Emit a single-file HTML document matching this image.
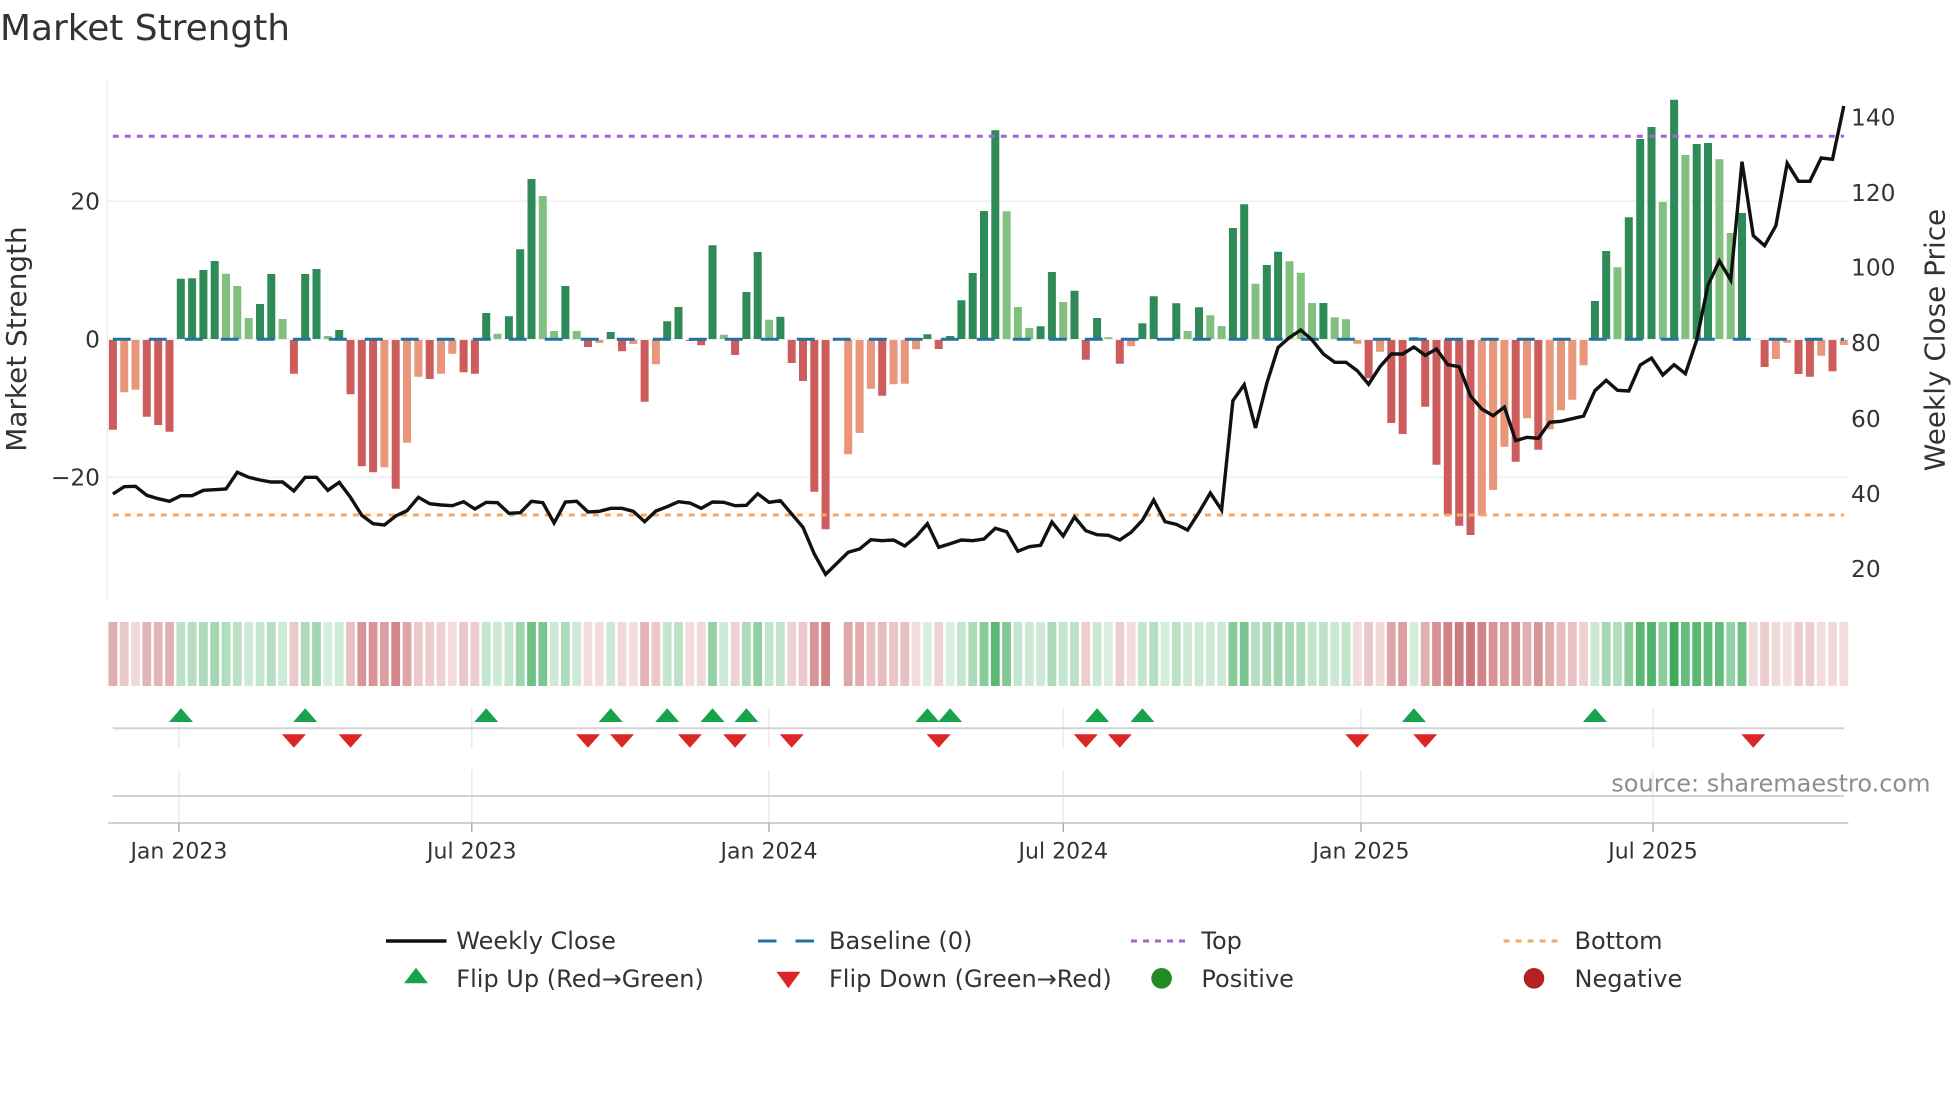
<!DOCTYPE html>
<html><head><meta charset="utf-8"><title>Market Strength</title>
<style>
html,body{margin:0;padding:0;background:#fff;width:1960px;height:1102px;overflow:hidden}
svg{display:block}
text{font-family:"DejaVu Sans","Liberation Sans",sans-serif;fill:#333}
.t{font-size:22px}
.y{font-size:23.3px}
.l{font-size:27.9px}
.g{font-size:24px}
</style></head><body>
<svg width="1960" height="1102" viewBox="0 0 1960 1102" xmlns="http://www.w3.org/2000/svg">
<rect width="1960" height="1102" fill="#fff"/>
<text x="0" y="40" style="font-size:35.9px">Market Strength</text>

<!-- spine + grid -->
<path d="M107.3 80V599" stroke="#f0f0f0" stroke-width="1.6" fill="none"/>
<path d="M107 201.3H1849M107 477.3H1849M107 339.3H1849" stroke="#efefef" stroke-width="1.6" fill="none"/>

<!-- bars -->
<g fill="none" stroke-width="8">
<path stroke="#2e8b57" d="M180.8 339V278.7M192.1 339V278.3M203.4 339V270M214.7 339V261M260 339V304M271.3 339V274M305.2 339V274M316.5 339V269M339.2 339V330M486.2 339V313M508.9 339V316.3M520.2 339V249.3M531.5 339V179M565.4 339V286M610.7 339V332M667.2 339V321.3M678.5 339V307M712.5 339V245.3M746.4 339V292M757.7 339V252M780.4 339V316.7M927.4 339V334.3M950.1 339V336M961.4 339V300.3M972.7 339V273M984 339V211M995.3 339V130.3M1040.6 339V326.3M1051.9 339V272M1074.5 339V290.7M1097.1 339V318M1142.4 339V323.3M1153.7 339V296.3M1176.3 339V303.3M1199 339V307.3M1232.9 339V228M1244.2 339V204.3M1266.8 339V265M1278.1 339V251.7M1323.4 339V303M1413.9 339V337.3M1594.9 339V301M1606.2 339V251M1628.8 339V217.3M1640.2 339V139M1651.5 339V127M1674.1 339V99.7M1696.7 339V144M1708 339V143M1742 339V213"/>
<path stroke="#81c07f" d="M226 339V273.7M237.3 339V286M248.7 339V318M282.6 339V319M327.8 339V336M497.5 339V333.7M542.8 339V196M554.1 339V331M576.7 339V331M723.8 339V334.7M769.1 339V319.7M1006.6 339V211.3M1017.9 339V307M1029.3 339V328M1063.2 339V302M1108.4 339V337.3M1187.6 339V331M1210.3 339V315.3M1221.6 339V326M1255.5 339V283.7M1289.5 339V261.3M1300.8 339V272.7M1312.1 339V303M1334.7 339V317.3M1346 339V319.3M1617.5 339V267.3M1662.8 339V202M1685.4 339V155M1719.4 339V159.3M1730.7 339V233"/>
<path stroke="#cd5c5c" d="M112.9 340V429.7M146.8 340V416.7M158.2 340V425M169.5 340V431.7M293.9 340V373.7M350.5 340V394.3M361.8 340V466.3M373.1 340V472.3M395.7 340V488.7M429.7 340V379M463.6 340V372.3M474.9 340V373.7M588 340V347M622 340V351.3M644.6 340V401.7M689.9 340V341M701.2 340V345.3M735.1 340V355M791.7 340V363M803 340V381M814.3 340V491.7M825.6 340V529.3M882.2 340V395.7M938.7 340V349M1085.8 340V359.7M1119.8 340V363.7M1368.6 340V378.3M1391.3 340V423M1402.6 340V434M1425.2 340V406.7M1436.5 340V464.7M1447.8 340V514.7M1459.2 340V525.7M1470.5 340V535M1515.7 340V461.7M1538.3 340V449.7M1764.6 340V367M1798.5 340V374M1809.9 340V376.7M1832.5 340V371.3"/>
<path stroke="#e9967a" d="M124.2 340V392.3M135.5 340V389.7M384.4 340V467.3M407 340V442.7M418.4 340V376.7M441 340V373.7M452.3 340V353.7M599.4 340V343M633.3 340V344M655.9 340V364.3M848.2 340V454.3M859.6 340V433M870.9 340V388.7M893.5 340V384.3M904.8 340V383.7M916.1 340V349.3M1131.1 340V346.3M1357.3 340V343.7M1380 340V351.7M1481.8 340V515.7M1493.1 340V490M1504.4 340V446.7M1527 340V418.3M1549.7 340V429.3M1561 340V410.3M1572.3 340V399.7M1583.6 340V365.3M1775.9 340V359M1787.2 340V342.7M1821.2 340V355.7M1843.8 340V345"/>
</g>

<!-- reference lines -->
<path d="M112.8 339.3H1844" stroke="#2471a3" stroke-width="3" stroke-dasharray="17.9 18.1" fill="none"/>
<path d="M112.8 136.3H1844" stroke="#a066d3" stroke-width="3" stroke-dasharray="6 6" fill="none"/>
<path d="M112.8 515H1844" stroke="#f2a868" stroke-width="3" stroke-dasharray="6 6" fill="none"/>

<!-- weekly close -->
<polyline fill="none" stroke="#111" stroke-width="3.4" stroke-linejoin="miter" points="112.9,494 124.2,486.7 135.5,486.3 146.8,495.3 158.2,498.7 169.5,501.3 180.8,495.7 192.1,495.7 203.4,490.3 214.7,489.7 226,489 237.3,472.3 248.7,477.3 260,480 271.3,482 282.6,482 293.9,491 305.2,477.3 316.5,477.3 327.8,490.3 339.2,482.3 350.5,497.3 361.8,515.3 373.1,523.7 384.4,525 395.7,516 407,510.7 418.4,497.3 429.7,503.7 441,505 452.3,505.7 463.6,501.7 474.9,509 486.2,502.3 497.5,502.7 508.9,513.3 520.2,512.7 531.5,501.3 542.8,502.7 554.1,523 565.4,502 576.7,501.3 588,512 599.4,511.3 610.7,508.3 622,508.3 633.3,511.3 644.6,521.7 655.9,511 667.2,506.7 678.5,501.7 689.9,503 701.2,508.3 712.5,502 723.8,502.3 735.1,505.7 746.4,505.3 757.7,493.7 769.1,502.3 780.4,500.7 791.7,514 803,527.3 814.3,554 825.6,574.3 848.2,552.3 859.6,549 870.9,539.7 882.2,540.7 893.5,540 904.8,546 916.1,536.7 927.4,523.7 938.7,547.3 950.1,543.7 961.4,540 972.7,540.7 984,539 995.3,528.3 1006.6,531.7 1017.9,551.3 1029.3,546.7 1040.6,545.3 1051.9,522 1063.2,536 1074.5,517 1085.8,530.7 1097.1,534.7 1108.4,535.3 1119.8,540 1131.1,532.3 1142.4,520.3 1153.7,500 1165,521.7 1176.3,524.3 1187.6,530 1199,512.3 1210.3,493 1221.6,510 1232.9,400.7 1244.2,384.7 1255.5,428 1266.8,383.3 1278.1,347.5 1289.5,337.5 1300.8,330 1312.1,340 1323.4,354 1334.7,362.3 1346,362.3 1357.3,370.7 1368.6,384.3 1380,366.7 1391.3,354 1402.6,354 1413.9,347 1425.2,355.3 1436.5,349 1447.8,364.7 1459.2,366.7 1470.5,396 1481.8,409 1493.1,415.7 1504.4,407 1515.7,440.7 1527,437.3 1538.3,438.3 1549.7,422.3 1561,421.3 1572.3,418.7 1583.6,416 1594.9,390.7 1606.2,380.3 1617.5,390.3 1628.8,391 1640.2,365 1651.5,358 1662.8,375 1674.1,364.7 1685.4,373.7 1696.7,340 1708,285 1719.4,261 1730.7,280 1742,161.7 1753.3,235.7 1764.6,245.7 1775.9,225.7 1787.2,163.3 1798.5,181.3 1809.9,181.3 1821.2,158 1832.5,159.3 1843.8,106"/>

<!-- y ticks -->
<text class="y" x="100" y="209.5" text-anchor="end">20</text>
<text class="y" x="100" y="347.5" text-anchor="end">0</text>
<text class="y" x="100" y="485.5" text-anchor="end">−20</text>
<text class="y" x="1851" y="125.7">140</text>
<text class="y" x="1851" y="200.9">120</text>
<text class="y" x="1851" y="275.6">100</text>
<text class="y" x="1851" y="351.2">80</text>
<text class="y" x="1851" y="427.2">60</text>
<text class="y" x="1851" y="501.8">40</text>
<text class="y" x="1851" y="577">20</text>
<text class="l" transform="translate(26 339) rotate(-90)" text-anchor="middle">Market Strength</text>
<text class="l" transform="translate(1944.5 340) rotate(-90)" text-anchor="middle">Weekly Close Price</text>

<!-- heat strip -->
<g transform="translate(0 622)" fill="none" stroke-width="8.8" opacity=".92">
<g stroke="#b84045">
<path d="M112.9 0V64" stroke-opacity=".46"/><path d="M124.2 0V64" stroke-opacity=".3"/><path d="M135.5 0V64" stroke-opacity=".22"/><path d="M146.8 0V64" stroke-opacity=".42"/><path d="M158.2 0V64" stroke-opacity=".42"/><path d="M169.5 0V64" stroke-opacity=".45"/>
<path d="M293.9 0V64" stroke-opacity=".3"/>
<path d="M350.5 0V64" stroke-opacity=".35"/><path d="M361.8 0V64" stroke-opacity=".6"/><path d="M373.1 0V64" stroke-opacity=".6"/><path d="M384.4 0V64" stroke-opacity=".55"/><path d="M395.7 0V64" stroke-opacity=".68"/><path d="M407 0V64" stroke-opacity=".5"/><path d="M418.4 0V64" stroke-opacity=".3"/><path d="M429.7 0V64" stroke-opacity=".28"/><path d="M441 0V64" stroke-opacity=".25"/><path d="M452.3 0V64" stroke-opacity=".2"/><path d="M463.6 0V64" stroke-opacity=".3"/><path d="M474.9 0V64" stroke-opacity=".28"/>
<path d="M588 0V64" stroke-opacity=".2"/><path d="M599.4 0V64" stroke-opacity=".2"/><path d="M622 0V64" stroke-opacity=".22"/><path d="M633.3 0V64" stroke-opacity=".2"/><path d="M644.6 0V64" stroke-opacity=".42"/><path d="M655.9 0V64" stroke-opacity=".3"/>
<path d="M689.9 0V64" stroke-opacity=".2"/><path d="M701.2 0V64" stroke-opacity=".22"/><path d="M735.1 0V64" stroke-opacity=".25"/><path d="M791.7 0V64" stroke-opacity=".25"/><path d="M803 0V64" stroke-opacity=".3"/><path d="M814.3 0V64" stroke-opacity=".6"/><path d="M825.6 0V64" stroke-opacity=".72"/>
<path d="M848.2 0V64" stroke-opacity=".5"/><path d="M859.6 0V64" stroke-opacity=".48"/><path d="M870.9 0V64" stroke-opacity=".35"/><path d="M882.2 0V64" stroke-opacity=".38"/><path d="M893.5 0V64" stroke-opacity=".33"/><path d="M904.8 0V64" stroke-opacity=".35"/><path d="M916.1 0V64" stroke-opacity=".2"/>
<path d="M938.7 0V64" stroke-opacity=".25"/><path d="M1085.8 0V64" stroke-opacity=".28"/><path d="M1119.8 0V64" stroke-opacity=".28"/><path d="M1131.1 0V64" stroke-opacity=".2"/>
<path d="M1357.3 0V64" stroke-opacity=".2"/><path d="M1368.6 0V64" stroke-opacity=".32"/><path d="M1380 0V64" stroke-opacity=".22"/><path d="M1391.3 0V64" stroke-opacity=".5"/><path d="M1402.6 0V64" stroke-opacity=".55"/>
<path d="M1425.2 0V64" stroke-opacity=".45"/><path d="M1436.5 0V64" stroke-opacity=".62"/><path d="M1447.8 0V64" stroke-opacity=".7"/><path d="M1459.2 0V64" stroke-opacity=".75"/><path d="M1470.5 0V64" stroke-opacity=".78"/><path d="M1481.8 0V64" stroke-opacity=".7"/><path d="M1493.1 0V64" stroke-opacity=".62"/><path d="M1504.4 0V64" stroke-opacity=".55"/><path d="M1515.7 0V64" stroke-opacity=".6"/><path d="M1527 0V64" stroke-opacity=".45"/><path d="M1538.3 0V64" stroke-opacity=".6"/><path d="M1549.7 0V64" stroke-opacity=".48"/><path d="M1561 0V64" stroke-opacity=".38"/><path d="M1572.3 0V64" stroke-opacity=".35"/><path d="M1583.6 0V64" stroke-opacity=".25"/>
<path d="M1753.3 0V64" stroke-opacity=".2"/><path d="M1764.6 0V64" stroke-opacity=".28"/><path d="M1775.9 0V64" stroke-opacity=".22"/><path d="M1787.2 0V64" stroke-opacity=".18"/><path d="M1798.5 0V64" stroke-opacity=".28"/><path d="M1809.9 0V64" stroke-opacity=".28"/><path d="M1821.2 0V64" stroke-opacity=".2"/><path d="M1832.5 0V64" stroke-opacity=".22"/><path d="M1843.8 0V64" stroke-opacity=".2"/>
</g>
<g stroke="#2da44e">
<path d="M180.8 0V64" stroke-opacity=".35"/><path d="M192.1 0V64" stroke-opacity=".38"/><path d="M203.4 0V64" stroke-opacity=".42"/><path d="M214.7 0V64" stroke-opacity=".48"/><path d="M226 0V64" stroke-opacity=".4"/><path d="M237.3 0V64" stroke-opacity=".35"/><path d="M248.7 0V64" stroke-opacity=".25"/><path d="M260 0V64" stroke-opacity=".3"/><path d="M271.3 0V64" stroke-opacity=".38"/><path d="M282.6 0V64" stroke-opacity=".25"/>
<path d="M305.2 0V64" stroke-opacity=".42"/><path d="M316.5 0V64" stroke-opacity=".48"/><path d="M327.8 0V64" stroke-opacity=".22"/><path d="M339.2 0V64" stroke-opacity=".25"/>
<path d="M486.2 0V64" stroke-opacity=".3"/><path d="M497.5 0V64" stroke-opacity=".25"/><path d="M508.9 0V64" stroke-opacity=".3"/><path d="M520.2 0V64" stroke-opacity=".5"/><path d="M531.5 0V64" stroke-opacity=".75"/><path d="M542.8 0V64" stroke-opacity=".68"/><path d="M554.1 0V64" stroke-opacity=".25"/><path d="M565.4 0V64" stroke-opacity=".42"/><path d="M576.7 0V64" stroke-opacity=".25"/><path d="M610.7 0V64" stroke-opacity=".25"/>
<path d="M667.2 0V64" stroke-opacity=".3"/><path d="M678.5 0V64" stroke-opacity=".35"/><path d="M712.5 0V64" stroke-opacity=".55"/><path d="M723.8 0V64" stroke-opacity=".25"/><path d="M746.4 0V64" stroke-opacity=".42"/><path d="M757.7 0V64" stroke-opacity=".58"/><path d="M769.1 0V64" stroke-opacity=".3"/><path d="M780.4 0V64" stroke-opacity=".32"/>
<path d="M927.4 0V64" stroke-opacity=".2"/><path d="M950.1 0V64" stroke-opacity=".2"/><path d="M961.4 0V64" stroke-opacity=".3"/><path d="M972.7 0V64" stroke-opacity=".42"/><path d="M984 0V64" stroke-opacity=".62"/><path d="M995.3 0V64" stroke-opacity=".85"/><path d="M1006.6 0V64" stroke-opacity=".65"/><path d="M1017.9 0V64" stroke-opacity=".3"/><path d="M1029.3 0V64" stroke-opacity=".25"/><path d="M1040.6 0V64" stroke-opacity=".25"/><path d="M1051.9 0V64" stroke-opacity=".42"/><path d="M1063.2 0V64" stroke-opacity=".3"/><path d="M1074.5 0V64" stroke-opacity=".35"/>
<path d="M1097.1 0V64" stroke-opacity=".28"/><path d="M1108.4 0V64" stroke-opacity=".2"/><path d="M1142.4 0V64" stroke-opacity=".3"/><path d="M1153.7 0V64" stroke-opacity=".38"/><path d="M1165 0V64" stroke-opacity=".22"/><path d="M1176.3 0V64" stroke-opacity=".35"/><path d="M1187.6 0V64" stroke-opacity=".25"/><path d="M1199 0V64" stroke-opacity=".28"/><path d="M1210.3 0V64" stroke-opacity=".25"/><path d="M1221.6 0V64" stroke-opacity=".25"/><path d="M1232.9 0V64" stroke-opacity=".62"/><path d="M1244.2 0V64" stroke-opacity=".68"/><path d="M1255.5 0V64" stroke-opacity=".38"/><path d="M1266.8 0V64" stroke-opacity=".45"/><path d="M1278.1 0V64" stroke-opacity=".5"/><path d="M1289.5 0V64" stroke-opacity=".45"/><path d="M1300.8 0V64" stroke-opacity=".42"/><path d="M1312.1 0V64" stroke-opacity=".32"/><path d="M1323.4 0V64" stroke-opacity=".35"/><path d="M1334.7 0V64" stroke-opacity=".28"/><path d="M1346 0V64" stroke-opacity=".32"/>
<path d="M1413.9 0V64" stroke-opacity=".22"/>
<path d="M1594.9 0V64" stroke-opacity=".28"/><path d="M1606.2 0V64" stroke-opacity=".45"/><path d="M1617.5 0V64" stroke-opacity=".4"/><path d="M1628.8 0V64" stroke-opacity=".6"/><path d="M1640.2 0V64" stroke-opacity=".85"/><path d="M1651.5 0V64" stroke-opacity=".9"/><path d="M1662.8 0V64" stroke-opacity=".6"/><path d="M1674.1 0V64" stroke-opacity="1"/><path d="M1685.4 0V64" stroke-opacity=".78"/><path d="M1696.7 0V64" stroke-opacity=".85"/><path d="M1708 0V64" stroke-opacity=".8"/><path d="M1719.4 0V64" stroke-opacity=".8"/><path d="M1730.7 0V64" stroke-opacity=".55"/><path d="M1742 0V64" stroke-opacity=".75"/>
</g>
</g>

<!-- lower axes -->
<path d="M178.9 708V748M471.8 708V748M769 708V748M1063.3 708V748M1361 708V748M1653 708V748M178.9 770V823M471.8 770V823M769 770V823M1063.3 770V823M1361 770V823M1653 770V823" stroke="#ebebee" stroke-width="1.6" fill="none"/>
<path d="M112.8 728.3H1844M112.8 796H1844" stroke="#d2d2d2" stroke-width="2" fill="none"/>
<path d="M108 823H1848.4" stroke="#d2d2d2" stroke-width="2" fill="none"/>
<path d="M178.9 823V832M471.8 823V832M769 823V832M1063.3 823V832M1361 823V832M1653 823V832" stroke="#aaa" stroke-width="1.4" fill="none"/>

<!-- flips -->
<g fill="#16a34a">
<polygon points="169,722 181,708.3 193,722"/><polygon points="293.2,722 305.2,708.3 317.2,722"/><polygon points="474.2,722 486.2,708.3 498.2,722"/><polygon points="598.7,722 610.7,708.3 622.7,722"/><polygon points="655.2,722 667.2,708.3 679.2,722"/><polygon points="700.5,722 712.5,708.3 724.5,722"/><polygon points="734.4,722 746.4,708.3 758.4,722"/><polygon points="915.4,722 927.4,708.3 939.4,722"/><polygon points="938.1,722 950.1,708.3 962.1,722"/><polygon points="1085.1,722 1097.1,708.3 1109.1,722"/><polygon points="1130.4,722 1142.4,708.3 1154.4,722"/><polygon points="1401.9,722 1413.9,708.3 1425.9,722"/><polygon points="1582.9,722 1594.9,708.3 1606.9,722"/>
</g>
<g fill="#dc2626">
<polygon points="281.9,734.3 293.9,747.7 305.9,734.3"/><polygon points="338.5,734.3 350.5,747.7 362.5,734.3"/><polygon points="576,734.3 588,747.7 600,734.3"/><polygon points="610,734.3 622,747.7 634,734.3"/><polygon points="677.9,734.3 689.9,747.7 701.9,734.3"/><polygon points="723.1,734.3 735.1,747.7 747.1,734.3"/><polygon points="779.7,734.3 791.7,747.7 803.7,734.3"/><polygon points="926.7,734.3 938.7,747.7 950.7,734.3"/><polygon points="1073.8,734.3 1085.8,747.7 1097.8,734.3"/><polygon points="1107.8,734.3 1119.8,747.7 1131.8,734.3"/><polygon points="1345.3,734.3 1357.3,747.7 1369.3,734.3"/><polygon points="1413.2,734.3 1425.2,747.7 1437.2,734.3"/><polygon points="1741.3,734.3 1753.3,747.7 1765.3,734.3"/>
</g>

<text x="1930.5" y="791.7" text-anchor="end" style="font-size:24px;fill:#8e8e8e">source: sharemaestro.com</text>

<!-- x ticks -->
<text class="t" x="178.9" y="858.5" text-anchor="middle">Jan 2023</text>
<text class="t" x="471.8" y="858.5" text-anchor="middle">Jul 2023</text>
<text class="t" x="769" y="858.5" text-anchor="middle">Jan 2024</text>
<text class="t" x="1063.3" y="858.5" text-anchor="middle">Jul 2024</text>
<text class="t" x="1361" y="858.5" text-anchor="middle">Jan 2025</text>
<text class="t" x="1653" y="858.5" text-anchor="middle">Jul 2025</text>

<!-- legend -->
<path d="M386 941H446.5" stroke="#111" stroke-width="3.4" fill="none"/>
<path d="M758 941H776.5M795.5 941H814" stroke="#2471a3" stroke-width="3" fill="none"/>
<path d="M1131 941H1187.5" stroke="#a066d3" stroke-width="3" stroke-dasharray="6 6" fill="none"/>
<path d="M1503.6 941H1560" stroke="#f2a868" stroke-width="3" stroke-dasharray="6 6" fill="none"/>
<polygon points="404,983.3 416,967.7 428,983.3" fill="#16a34a"/>
<polygon points="776.4,971.7 788.4,988.3 800.4,971.7" fill="#dc2626"/>
<circle cx="1161.6" cy="978.3" r="10.3" fill="#228b22"/>
<circle cx="1534" cy="978.3" r="10.3" fill="#b22222"/>
<text class="g" x="456.3" y="948.8">Weekly Close</text>
<text class="g" x="829" y="948.8">Baseline (0)</text>
<text class="g" x="1201.4" y="948.8">Top</text>
<text class="g" x="1574.5" y="948.8">Bottom</text>
<text class="g" x="456.3" y="987">Flip Up (Red→Green)</text>
<text class="g" x="829" y="987">Flip Down (Green→Red)</text>
<text class="g" x="1201.4" y="987">Positive</text>
<text class="g" x="1574.5" y="987">Negative</text>
</svg>
</body></html>
